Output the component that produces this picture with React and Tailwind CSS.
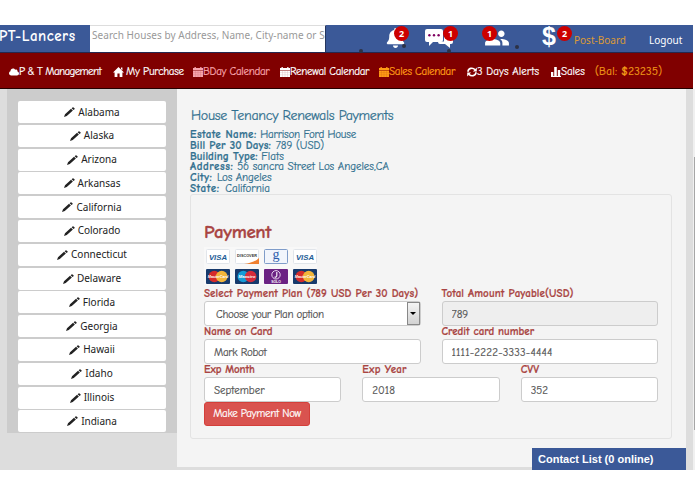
import React, { useState } from 'react';
import { FaBell, FaCloud } from 'react-icons/fa';
import { MdPeople } from 'react-icons/md';

const states = [
  'Alabama', 'Alaska', 'Arizona', 'Arkansas', 'California', 'Colorado', 'Connecticut',
  'Delaware', 'Florida', 'Georgia', 'Hawaii', 'Idaho', 'Illinois', 'Indiana'
];

const details = [
  { label: 'Estate Name:', value: 'Harrison Ford House', labelClass: 'tracking-[0.38px]', valueClass: 'tracking-[-0.2px]' },
  { label: 'Bill Per 30 Days:', value: '789 (USD)', labelClass: 'tracking-[0.15px]', valueClass: 'ml-[1px] tracking-[0px]' },
  { label: 'Building Type:', value: 'Flats', labelClass: 'tracking-[0.1px]', valueClass: 'tracking-[0.1px]' },
  { label: 'Address:', value: '56 sancra Street Los Angeles,CA', labelClass: 'tracking-[0.6px]', valueClass: 'tracking-[-0.03px]' },
  { label: 'City:', value: 'Los Angeles', labelClass: 'tracking-[0.4px]', valueClass: 'ml-[1px] tracking-[-0.1px]' },
  { label: 'State:', value: 'California', labelClass: 'tracking-[0.6px]', valueClass: 'ml-[2px] tracking-[0px]' }
];

const Calendar = () => (
  <svg className="w-[10px] h-[10px] shrink-0" viewBox="0 0 10 10" fill="currentColor">
    <path d="M0 1h1.5V0h1.3v1h4.4V0h1.3v1H10v2H0zM0 3.6h10V10H0z" />
    <path d="M0 5.6h10M0 7.8h10M2.5 4v6M5 4v6M7.5 4v6" stroke="#800000" strokeWidth=".3" opacity=".35" />
  </svg>
);

const Home = () => (
  <svg className="w-[11px] h-[10px] mr-[2px] shrink-0" viewBox="0 0 11 10" fill="currentColor">
    <path d="M5.5 0L11 5.4H9.4V10H6.6V6.5H4.4V10H1.6V5.4H0zM8 .5h1.4v2.8L8 2z" />
  </svg>
);

const Refresh = () => (
  <svg className="w-[10px] h-[10px] shrink-0" viewBox="0 0 10 10" fill="none" stroke="currentColor" strokeWidth="1.7">
    <path d="M1 4.7C1.2 1 5.8.2 8 2.8M9 5.3C8.8 9 4.2 9.8 2 7.2" />
    <path d="M9.8.6v4H5.9zM.2 9.4v-4h3.9z" fill="currentColor" stroke="none" />
  </svg>
);

const Bars = () => (
  <svg className="w-[10px] h-[10px] shrink-0" viewBox="0 0 10 10" fill="currentColor">
    <path d="M0 5h2.3v4H0zM3.2 0h2.6v9H3.2zM6.8 3h2.4v6H6.8zM0 9h10v1H0z" />
  </svg>
);

const Pencil = () => (
  <svg className="w-[11px] h-[10px] shrink-0" viewBox="0 0 11 10" fill="#222">
    <path d="M0 10l1-2.8L7 1.7l1.9 1.7-6.1 5.7zM7.6 1.2l.9-.8q.6-.4 1 0l1 .9q.4.5 0 1l-1 .8z" />
  </svg>
);

const navItems = [
  { label: 'P & T Management', icon: <FaCloud className="w-[10px] h-[10px] shrink-0" />, className: 'w-[104px] text-white tracking-[-0.62px]' },
  { label: 'My Purchase', icon: <Home />, className: 'w-[80px] text-white tracking-[-0.25px]' },
  { label: 'BDay Calendar', icon: <Calendar />, className: 'w-[87px] text-[#f8a5ad] tracking-[-0.3px]' },
  { label: 'Renewal Calendar', icon: <Calendar />, className: 'w-[99px] text-white tracking-[-0.3px]' },
  { label: 'Sales Calendar', icon: <Calendar />, className: 'w-[88px] text-[#ff9d16] tracking-[-0.3px]' },
  { label: '3 Days Alerts', icon: <Refresh />, className: 'w-[84px] text-white tracking-[0.05px]' },
  { label: 'Sales', icon: <Bars />, className: 'w-[44px] text-white tracking-[-0.1px]' }
];

const Badge = ({ count, className }) => (
  <span className={`absolute w-[15px] h-[15px] rounded-full bg-[#cc0000] text-white text-[9px] leading-[15px] text-center font-bold font-['Noto_Sans',sans-serif] ${className}`}>
    {count}
  </span>
);

const Dot = ({ className }) => <span className={`absolute w-[4px] h-[4px] rounded-full bg-[#2c3245] ${className}`} />;

const ChatIcon = () => (
  <svg className="w-[29px] h-[19px]" viewBox="0 0 29 19" fill="white">
    <path d="M13 12.5h6V6h7q2 0 2 2v5q0 2-2 2h-1v4l-5-4h-5q-2 0-2-2z" />
    <path d="M2 0h14q2 0 2 2v9q0 2-2 2H8l-4 4v-4H2q-2 0-2-2V2q0-2 2-2z" />
    <g fill="#800060"><circle cx="4.4" cy="6.3" r="1.2" /><circle cx="9" cy="6.3" r="1.2" /><circle cx="13.6" cy="6.3" r="1.2" /></g>
  </svg>
);

const Card = ({ type }) => {
  const text = { fontFamily: 'Liberation Sans', textAnchor: 'middle' };
  return (
    <svg className="w-[24px] h-[15px]" viewBox="0 0 24 15">
      {type === 'visa' && (
        <>
          <rect x=".5" y=".5" width="23" height="14" rx="1" fill="#fff" stroke="#e1e5ea" />
          <text x="12" y="10.5" fontSize="7.8" fontWeight="bold" fontStyle="italic" fill="#1d5c96" {...text}>VISA</text>
        </>
      )}
      {type === 'discover' && (
        <>
          <rect x=".5" y=".5" width="23" height="14" rx="1" fill="#fff" stroke="#e1e5ea" />
          <path d="M24 9v6H9q10-1 15-6" fill="#f08030" />
          <text x="12" y="8.3" fontSize="3.8" fontWeight="bold" fill="#333" {...text}>DISCOVER</text>
        </>
      )}
      {type === 'google' && (
        <>
          <rect x=".5" y=".5" width="23" height="14" rx="1" fill="#f1f5fc" stroke="#7f9cc9" />
          <text x="12" y="10.2" fontSize="14" fill="#2c5cab" fontFamily="Liberation Serif" textAnchor="middle">g</text>
        </>
      )}
      {(type === 'mastercard' || type === 'maestro') && (
        <>
          <rect width="24" height="15" rx="1" fill="#173a6c" />
          <circle cx="8.3" cy="7.5" r="5.8" fill={type === 'maestro' ? '#159bd7' : '#d52b2b'} />
          <circle cx="15.7" cy="7.5" r="5.8" fill={type === 'maestro' ? '#d52b3b' : '#f2b53a'} />
          <text x="12" y="9" fontSize={type === 'maestro' ? 4.4 : 3.7} fontWeight="bold" fontStyle="italic" fill="#fff" {...text}>
            {type === 'maestro' ? 'Maestro' : 'MasterCard'}
          </text>
        </>
      )}
      {type === 'solo' && (
        <>
          <rect width="24" height="15" rx="1" fill="#6b2283" />
          <circle cx="12" cy="5.8" r="4.2" fill="none" stroke="#e9d5f0" strokeWidth="1" />
          <path d="M12.8 3v4q-.3 1.5-2.3 1" fill="none" stroke="#fff" strokeWidth="1.1" />
          <text x="12" y="13.8" fontSize="3.4" fontWeight="bold" fill="#fff" {...text}>SOLO</text>
        </>
      )}
    </svg>
  );
};

const Field = ({ label, labelClass = '', inputClass = '', value, readOnly }) => {
  const [text, setText] = useState(value);
  return (
    <label className="block min-w-0">
      <span className={`block h-[13px] leading-[11px] font-bold text-[#a94442] whitespace-nowrap [-webkit-text-stroke:0.2px] ${labelClass}`}>{label}</span>
      <input
        className={`block w-full h-[25px] rounded-[3px] border border-[#ccc] px-[9px] pt-px text-[11px] text-[#555] outline-none [-webkit-text-stroke:0.2px] ${readOnly ? 'bg-[#eee]' : 'bg-white'} ${inputClass}`}
        value={text}
        readOnly={readOnly}
        onChange={(e) => setText(e.target.value)}
      />
    </label>
  );
};

const App = () => {
  return (
    <div className="w-[695px] h-[494px] overflow-hidden bg-white pt-[25px] font-['Comic_Sans_MS','Comic_Neue',Lato,sans-serif] text-[11px]">
      {/* Top bar */}
      <header className="w-[693px] h-[28px] bg-[#3b5998] border-b border-[#252850] flex items-start">
        <div className="w-[90px] -ml-[1px] mr-[1px] pt-px text-[15px] leading-[21px] font-bold text-white whitespace-nowrap tracking-[0.5px]">PT-Lancers</div>
        <div className="w-[236px] h-[27px] border-t border-[#ddd] border-r border-r-[#26365d] bg-white pl-[2px] overflow-hidden whitespace-nowrap leading-[18px] text-[#999] text-[10px] font-['Noto_Sans',sans-serif] tracking-[0.05px]">
          Search Houses by Address, Name, City-name or S
        </div>
        <div className="relative w-[99px] h-[27px] pl-[60px] pt-[3px] text-white">
          <FaBell className="w-[19px] h-[20px]" />
          <Badge count="2" className="left-[68px] top-[1px]" />
          <Dot className="left-[33px] top-[24px]" />
          <Dot className="left-[76px] top-[19px]" />
        </div>
        <div className="relative w-[59px] h-[27px] pt-[4px]">
          <ChatIcon />
          <Badge count="1" className="left-[18px] top-[1px]" />
          <Dot className="left-[22px] top-[24px]" />
        </div>
        <div className="relative w-[58px] h-[27px] text-white">
          <MdPeople className="w-[26px] h-[26px]" />
          <Badge count="1" className="-left-[2px] top-[1px]" />
          <Dot className="left-[31px] top-[20px]" />
        </div>
        <div className="relative w-[32px] h-[27px] text-white">
          <span className="block text-[25px] leading-[23px] font-bold font-['Liberation_Sans',sans-serif]">$</span>
          <Badge count="2" className="left-[15px] top-[1px]" />
        </div>
        <span className="w-[75px] pt-[7px] leading-[16px] text-[#dc9a35] font-['Noto_Sans',sans-serif] text-[10px]">Post-Board</span>
        <span className="pt-[7px] leading-[16px] text-white font-['Noto_Sans',sans-serif] text-[10px]">Logout</span>
      </header>

      {/* Main navigation */}
      <nav className="w-[693px] h-[36px] bg-[#800000] border-b border-[#250000] flex items-center pl-[9px] pt-[3px] whitespace-nowrap [-webkit-text-stroke:0.2px]">
        {navItems.map((item) => (
          <a key={item.label} className={`flex items-center shrink-0 ${item.className}`}>
            {item.icon}
            <span>{item.label}</span>
          </a>
        ))}
        <span className="text-[#f09a18] tracking-[0.3px]">(Bal: <b>$</b>23235)</span>
      </nav>

      <div className="flex">
        <div className="relative w-[693px] h-[381px] shrink-0 bg-[#ddd] flex items-start pl-[7px]">
          {/* State list */}
          <aside className="w-[170px] h-[344px] shrink-0 bg-[#ccc] pt-[12px] pl-[11px]">
            <ul className="w-[148px] flex flex-col gap-[1.8px]">
              {states.map((name) => (
                <li key={name} className="h-[22px] rounded-[2px] bg-white flex items-center justify-center gap-[3px] text-[10px] text-[#222] font-['Noto_Sans',sans-serif]">
                  <Pencil />
                  <span>{name}</span>
                </li>
              ))}
            </ul>
          </aside>

          {/* Payment page */}
          <main className="w-[509px] h-[378px] shrink-0 bg-[#f4f4f4] pl-[13px] pt-[18px]">
            <h1 className="h-[23px] pl-px text-[14px] leading-[18px] text-[#31708f] tracking-[-0.3px] whitespace-nowrap [-webkit-text-stroke:0.2px]">House Tenancy Renewals Payments</h1>
            <div className="h-[64px] text-[#31708f] leading-[10.8px] whitespace-nowrap [-webkit-text-stroke:0.2px]">
              {details.map((row) => (
                <div key={row.label}>
                  <b className={row.labelClass}>{row.label}</b> <span className={row.valueClass}>{row.value}</span>
                </div>
              ))}
            </div>

            <section className="w-[482px] h-[245px] rounded-[3px] border border-[#e3e3e3] px-[13px] pt-[25px]">
              <h2 className="h-[27px] text-[19px] leading-[25px] font-bold text-[#a94442] tracking-[-0.4px] [-webkit-text-stroke:0.3px]">Payment</h2>
              <div className="w-[113px] h-[38px] bg-[#f8f8f8] grid grid-cols-[repeat(4,24px)] gap-x-[5px] gap-y-[4px] pl-[2px] pt-[2px]">
                {['visa', 'discover', 'google', 'visa', 'mastercard', 'maestro', 'solo', 'mastercard'].map((type, index) => (
                  <Card key={index} type={type} />
                ))}
              </div>

              <form className="w-[454px] pt-[3px]" onSubmit={(e) => e.preventDefault()}>
                <div className="grid grid-cols-2 gap-x-[21px]">
                  <div>
                    <span className="block h-[13px] leading-[11px] font-bold text-[#a94442] whitespace-nowrap tracking-[0.1px] [-webkit-text-stroke:0.2px]">Select Payment Plan (789 USD Per 30 Days)</span>
                    <div className="h-[25px] rounded-[3px] border border-[#ccc] bg-white flex items-center justify-between pl-[11px] text-[#555]">
                      <span className="pt-[3px] tracking-[-0.33px] [-webkit-text-stroke:0.2px]">Choose your Plan option</span>
                      <span className="w-[13px] h-[23px] border border-[#888] bg-gradient-to-b from-[#f4f4f4] to-[#d2d2d2] flex items-center justify-center">
                        <span className="border-x-[3px] border-x-transparent border-t-[3px] border-t-black" />
                      </span>
                    </div>
                  </div>
                  <Field label="Total Amount Payable(USD)" value="789" readOnly labelClass="tracking-[0.1px]" />
                </div>
                <div className="grid grid-cols-2 gap-x-[21px]">
                  <Field label="Name on Card" value="Mark Robot" inputClass="tracking-[-0.3px]" />
                  <Field label="Credit card number" value="1111-2222-3333-4444" inputClass="tracking-[0.2px]" />
                </div>
                <div className="grid grid-cols-3 gap-x-[21px]">
                  <Field label="Exp Month" value="September" labelClass="tracking-[-0.1px]" />
                  <Field label="Exp Year" value="2018" labelClass="tracking-[0.2px]" />
                  <Field label="CVV" value="352" />
                </div>
                <button className="block w-[106px] h-[24px] rounded-[3px] border border-[#d43f3a] bg-[#d9534f] text-white text-[11px] whitespace-nowrap tracking-[-0.3px] [-webkit-text-stroke:0.2px]">Make Payment Now</button>
              </form>
            </section>
          </main>

          {/* Chat contacts pinned over the page corner */}
          <div className="absolute left-[532px] bottom-0 w-[154px] h-[22px] bg-[#3b5998] pl-[6px] text-white font-bold leading-[22px] text-[11px] font-['Liberation_Sans',sans-serif]">
            Contact List (0 online)
          </div>
        </div>

        {/* Scrollbar edge */}
        <div className="w-[2px] h-[381px] bg-[#f0f0f0] pt-[68px] pl-px">
          <div className="w-px h-[273px] bg-[#a6a6a6]" />
        </div>
      </div>
    </div>
  );
};

export default App;
